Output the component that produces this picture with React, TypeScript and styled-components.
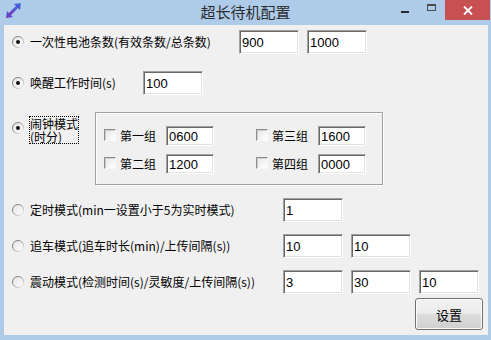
import React, { useId } from "react";
import styled, { createGlobalStyle } from "styled-components";

const Global = createGlobalStyle`
  html, body { margin: 0; padding: 0; overflow: hidden; background: #aecbe9; }
  * { box-sizing: border-box; }
`;

const Window = styled.div`
  width: 491px;
  height: 340px;
  background: #aecbe9;
  display: flex;
  flex-direction: column;
  font-family: "Noto Sans CJK SC", "Liberation Sans", sans-serif;
`;

const TitleBar = styled.div`
  height: 25px;
  flex: none;
  display: grid;
  grid-template-columns: 1fr auto 1fr;
  align-items: start;
`;

const AppIcon = styled.svg`
  display: block;
  margin: 2px 0 0 5px;
`;

const Title = styled.div`
  font-size: 15px;
  line-height: 24px;
  color: #2b2b2b;
`;

const Controls = styled.div`
  display: flex;
  justify-content: flex-end;
  align-items: flex-start;
  padding-right: 1px;
`;

const CtlBtn = styled.div<{ $w: number; $red?: boolean }>`
  width: ${(p) => p.$w}px;
  height: 20px;
  display: flex;
  align-items: center;
  justify-content: center;
  background: ${(p) => (p.$red ? "#c75050" : "transparent")};
`;

const MinGlyph = styled.div`
  width: 8px;
  height: 2px;
  background: #2b2b2b;
  margin-top: 4px;
`;

const MaxGlyph = styled.div`
  width: 9px;
  height: 7px;
  border: 1px solid #4a4a4a;
  border-top-width: 2px;
  margin-top: -6px;
`;

const Client = styled.div`
  flex: 1;
  margin: 0 3px 5px 4px;
  background: #f0f0f0;
  padding: 5px 5px 0 8px;
  display: flex;
  flex-direction: column;
`;

const Row = styled.div<{ $top: number; $start?: boolean }>`
  display: flex;
  align-items: ${(p) => (p.$start ? "flex-start" : "center")};
  margin-top: ${(p) => p.$top}px;
  height: ${(p) => (p.$start ? "auto" : "24px")};
`;

const RadioBox = styled.svg<{ $mt?: number }>`
  display: block;
  flex: none;
  margin-right: 6px;
  margin-top: ${(p) => p.$mt ?? 0}px;
`;

const Label = styled.span<{ $w: number }>`
  display: block;
  flex: none;
  width: ${(p) => p.$w}px;
  font-size: 12px;
  line-height: 14px;
  color: #000;
  white-space: nowrap;
`;

const FocusLabel = styled.span`
  display: block;
  flex: none;
  width: 50px;
  margin: 4px 0 0 -1px;
  border: 1px dotted #000;
  font-size: 12px;
  line-height: 13px;
  color: #000;
`;

const Field = styled.input<{ $w: number; $h: number }>`
  width: ${(p) => p.$w}px;
  height: ${(p) => p.$h}px;
  flex: none;
  margin: 0 8px 0 0;
  padding: 0 0 0 2px;
  border: 1px solid;
  border-color: #a0a0a0 #ffffff #ffffff #a0a0a0;
  box-shadow: inset 1px 1px 0 #696969, inset -1px -1px 0 #e3e3e3;
  background: #fff;
  font-family: "Liberation Sans", Arial, sans-serif;
  font-size: 13px;
  color: #000;
  outline: none;
`;

const Group = styled.div`
  width: 288px;
  height: 73px;
  margin-left: 16px;
  border: 1px solid #a0a0a0;
  box-shadow: inset 1px 1px 0 #fff, 1px 1px 0 #fff;
  padding: 13px 0 0 8px;
  display: grid;
  grid-template-columns: auto auto;
  justify-content: start;
  column-gap: 34px;
  row-gap: 8px;
  align-content: start;
`;

const Cell = styled.div`
  display: flex;
  align-items: center;
  height: 20px;
`;

const Check = styled.span`
  display: block;
  flex: none;
  width: 12px;
  height: 12px;
  margin: -2px 4px 0 0;
  border: 1px solid;
  border-color: #8c8c8c #f8f8f8 #f8f8f8 #8c8c8c;
  box-shadow: inset 1px 1px 0 #cfcfcf;
  background: linear-gradient(135deg, #e6e6e6, #ffffff);
`;

const ButtonRow = styled.div`
  display: flex;
  justify-content: flex-end;
  margin-top: 4px;
`;

const Button = styled.button`
  width: 68px;
  height: 32px;
  border: 1px solid #707070;
  border-radius: 3px;
  box-shadow: inset 0 0 0 1px #fcfcfc;
  background: linear-gradient(#f2f2f2 0%, #ebebeb 50%, #dddddd 51%, #cfcfcf 100%);
  font-family: "Noto Sans CJK SC", sans-serif;
  font-size: 13px;
  color: #000;
  padding: 0;
`;

function Radio({ checked, mt }: { checked?: boolean; mt?: number }) {
  const id = useId().replace(/:/g, "");
  return (
    <RadioBox width="12" height="12" viewBox="0 0 12 12" $mt={mt}>
      <defs>
        <linearGradient id={`g${id}`} x1="0" y1="0" x2="1" y2="1">
          <stop offset="0" stopColor="#6f6f6f" />
          <stop offset="0.5" stopColor="#9a9a9a" />
          <stop offset="1" stopColor="#ffffff" />
        </linearGradient>
        <linearGradient id={`f${id}`} x1="0" y1="0" x2="1" y2="1">
          <stop offset="0" stopColor="#e4e4e4" />
          <stop offset="1" stopColor="#ffffff" />
        </linearGradient>
      </defs>
      <circle cx="6" cy="6" r="5.5" fill={`url(#f${id})`} stroke={`url(#g${id})`} strokeWidth="1" />
      {checked && <circle cx="6" cy="6" r="2" fill="#111" />}
    </RadioBox>
  );
}

function Input({ v, w = 60, h = 24 }: { v: string; w?: number; h?: number }) {
  return <Field $w={w} $h={h} defaultValue={v} readOnly />;
}

export default function App() {
  return (
    <>
      <Global />
      <Window>
        <TitleBar>
          <div>
            <AppIcon width="17" height="17" viewBox="0 0 17 17">
              <defs>
                <linearGradient id="ai" x1="0" y1="1" x2="1" y2="0">
                  <stop offset="0" stopColor="#8a2fb0" />
                  <stop offset="0.5" stopColor="#5a4fd0" />
                  <stop offset="1" stopColor="#2a86e8" />
                </linearGradient>
              </defs>
              <path d="M4 13 L13 4" stroke="url(#ai)" strokeWidth="3" />
              <polygon points="16,1 9,2 15,8" fill="url(#ai)" />
              <polygon points="1,16 2,9 8,15" fill="url(#ai)" />
            </AppIcon>
          </div>
          <Title>超长待机配置</Title>
          <Controls>
            <CtlBtn $w={27}>
              <MinGlyph />
            </CtlBtn>
            <CtlBtn $w={27}>
              <MaxGlyph />
            </CtlBtn>
            <CtlBtn $w={45} $red>
              <svg width="10" height="9" viewBox="0 0 10 9">
                <path d="M1 0.5 L9 8.5 M9 0.5 L1 8.5" stroke="#fff" strokeWidth="1.8" />
              </svg>
            </CtlBtn>
          </Controls>
        </TitleBar>
        <Client>
          <Row $top={0}>
            <Radio checked />
            <Label $w={209}>一次性电池条数(有效条数/总条数)</Label>
            <Input v="900" />
            <Input v="1000" />
          </Row>
          <Row $top={17}>
            <Radio checked />
            <Label $w={113}>唤醒工作时间(s)</Label>
            <Input v="100" />
          </Row>
          <Row $top={17} $start>
            <Radio checked mt={10} />
            <FocusLabel>
              闹钟模式
              <br />
              (时分)
            </FocusLabel>
            <Group>
              <Cell>
                <Check />
                <Label $w={46}>第一组</Label>
                <Input v="0600" w={48} h={20} />
              </Cell>
              <Cell>
                <Check />
                <Label $w={46}>第三组</Label>
                <Input v="1600" w={48} h={20} />
              </Cell>
              <Cell>
                <Check />
                <Label $w={46}>第二组</Label>
                <Input v="1200" w={48} h={20} />
              </Cell>
              <Cell>
                <Check />
                <Label $w={46}>第四组</Label>
                <Input v="0000" w={48} h={20} />
              </Cell>
            </Group>
          </Row>
          <Row $top={13}>
            <Radio />
            <Label $w={253}>定时模式(min一设置小于5为实时模式)</Label>
            <Input v="1" />
          </Row>
          <Row $top={12}>
            <Radio />
            <Label $w={253}>追车模式(追车时长(min)/上传间隔(s))</Label>
            <Input v="10" />
            <Input v="10" />
          </Row>
          <Row $top={12}>
            <Radio />
            <Label $w={253}>震动模式(检测时间(s)/灵敏度/上传间隔(s))</Label>
            <Input v="3" />
            <Input v="30" />
            <Input v="10" />
          </Row>
          <ButtonRow>
            <Button>设置</Button>
          </ButtonRow>
        </Client>
      </Window>
    </>
  );
}
